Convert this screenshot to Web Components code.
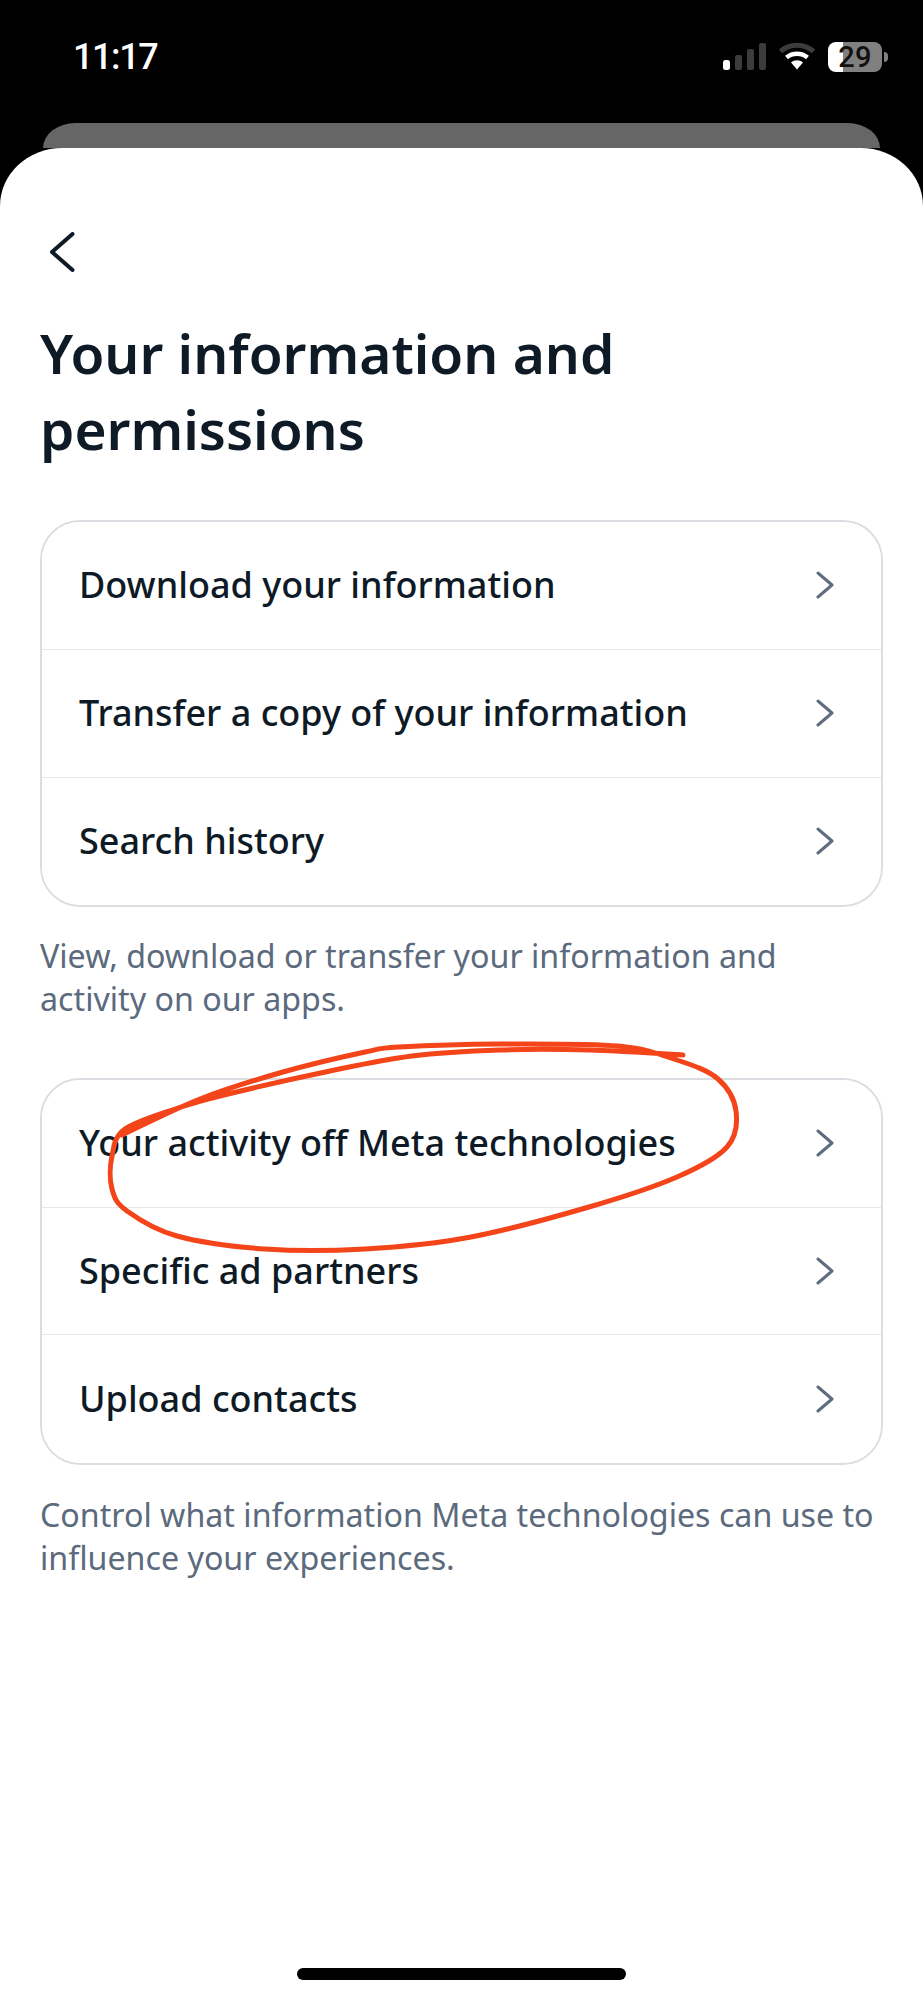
<!DOCTYPE html>
<html><head><meta charset="utf-8"><title>Your information and permissions</title>
<style>
html,body{margin:0;padding:0;background:#000;height:2000px;overflow:hidden}
body{font-family:"Noto Sans","Liberation Sans",sans-serif}
</style></head>
<body>
<phone-screen>
  <status-bar slot="status" time="11:17" battery="29"></status-bar>
  <back-icon-button></back-icon-button>
  <page-title>Your information and<br>permissions</page-title>
  <settings-group>
    <settings-row>Download your information</settings-row>
    <settings-row>Transfer a copy of your information</settings-row>
    <settings-row last>Search history</settings-row>
  </settings-group>
  <helper-text>View, download or transfer your information and<br>activity on our apps.</helper-text>
  <settings-group class="second" circled>
    <settings-row>Your activity off Meta technologies</settings-row>
    <settings-row>Specific ad partners</settings-row>
    <settings-row last>Upload contacts</settings-row>
  </settings-group>
  <helper-text class="last">Control what information Meta technologies can use to<br>influence your experiences.</helper-text>
</phone-screen>
<script>
function def(name, css, html, init){
  customElements.define(name, class extends HTMLElement{
    constructor(){super();const r=this.attachShadow({mode:'open'});r.innerHTML='<style>'+css+'</style>'+(typeof html==='function'?html(this):html);}
    connectedCallback(){ if(init) init(this); }
  });
}
def('phone-screen',`
  :host{display:flex;flex-direction:column;height:2000px;width:923px;background:#000;overflow:hidden}
  .peek{height:25px;margin:0 43px;background:#666;border-radius:52px 52px 0 0/40px 40px 0 0;flex:none}
  .sheet{flex:1;display:flex;flex-direction:column;background:#fff;border-radius:62px 62px 0 0/58px 58px 0 0;padding:84px 40px 0;min-height:0}
  .home{margin-top:auto;margin-bottom:20px;align-self:center;width:329px;height:12.500px;border-radius:6.500px;background:#000;flex:none}
`,`<slot name="status"></slot><div class="peek"></div><div class="sheet"><slot></slot><div class="home"></div></div>`);

def('status-bar',`
  :host{display:flex;align-items:flex-start;justify-content:space-between;height:123px;padding:0 35px 0 73px;box-sizing:border-box;color:#fff;flex:none}
  .time{font:500 36px/36px Roboto,"Liberation Sans",sans-serif;letter-spacing:-1.400px;margin-top:39px}
  .icons{display:flex;align-items:flex-start;margin-top:42px}
  svg{display:block}
  .wifi{margin-left:12px}
  .bat{margin-left:12px;display:flex;align-items:center}
  .cell{width:54px;height:30px;border-radius:8px;background:linear-gradient(90deg,#fff 0 15px,#808080 15px);color:#111;font:500 29px/31px Roboto,"Liberation Sans",sans-serif;text-align:center;letter-spacing:.3px}
  .nub{width:4px;height:10px;margin-left:2px;background:#808080;border-radius:0 4px 4px 0}
`,el=>`<div class="time">${el.getAttribute('time')}</div>
<div class="icons">
<svg width="43" height="28" viewBox="0 0 43 28"><rect x="0" y="18" width="7" height="10" rx="2.5" fill="#fff"/><rect x="12" y="13" width="7" height="15" rx="2" fill="#3c3c3c"/><rect x="24" y="7" width="7" height="21" rx="2" fill="#3c3c3c"/><rect x="36" y="1" width="7" height="27" rx="2" fill="#3c3c3c"/></svg>
<svg class="wifi" width="38" height="28" viewBox="0 0 38 28"><path d="M2.5 9.5C11.5 1.200 26.500 1.200 35.500 9.500" fill="none" stroke="#3c3c3c" stroke-width="5"/><path d="M8.500 15.500C14.500 10.500 23.500 10.500 29.500 15.500" fill="none" stroke="#fff" stroke-width="4.500"/><path d="M13 20.500C16.500 17.500 21.500 17.500 25 20.500L19 27.500Z" fill="#fff"/></svg>
<div class="bat"><div class="cell">${el.getAttribute('battery')}</div><div class="nub"></div></div>
</div>`);

def('back-icon-button',`:host{display:block;height:40px;flex:none}svg{display:block;margin-left:8px}`,
`<svg width="28" height="40" viewBox="0 0 28 40"><path d="M24.500 2L4 20L24.500 38" fill="none" stroke="#0e1a25" stroke-width="4" stroke-linecap="round" stroke-linejoin="round"/></svg>`);

def('page-title',`:host{display:block;font:600 55px/76px "Noto Sans","Liberation Sans",sans-serif;color:#0e1a25;margin-top:43px;flex:none}`,`<slot></slot>`);

def('settings-group',`
  :host{display:block;position:relative;flex:none;margin-top:53px}
  :host(.second){margin-top:57.500px}
  .box{border:2px solid #dadee3;border-radius:40px;overflow:hidden;background:#fff}
  svg{position:absolute;pointer-events:none;overflow:visible;left:0;top:0}
`,el=>`<div class="box"><slot></slot></div>`+(el.hasAttribute('circled')?`<svg width="1" height="1"><path fill="none" stroke="#f4441a" stroke-width="5" stroke-linecap="round" stroke-linejoin="round"/></svg>`:''),
el=>{
  const p=el.shadowRoot.querySelector('path'); if(!p) return;
  const ox=40, oy=1079;
  const pts=[[122,1136],[200,1100],[283,1073],[365,1053],[400,1048],[500,1045],[618,1047],[677,1061],[718,1080],[736,1112],[727,1148],[677,1178],[589,1208],[471,1238],[365,1250],[265,1250],[177,1237],[127,1212],[112,1190],[112,1157],[125,1130],[178,1109],[224,1096],[330,1072],[412,1057],[500,1051],[590,1051],[683,1056]].map(a=>[a[0]-ox,a[1]-oy]);
  let d='M'+pts[0].join(' ');
  for(let i=0;i<pts.length-1;i++){
    const a=pts[Math.max(i-1,0)],b=pts[i],c=pts[i+1],e=pts[Math.min(i+2,pts.length-1)];
    d+=` C${(b[0]+(c[0]-a[0])/6).toFixed(1)} ${(b[1]+(c[1]-a[1])/6).toFixed(1)} ${(c[0]-(e[0]-b[0])/6).toFixed(1)} ${(c[1]-(e[1]-b[1])/6).toFixed(1)} ${c[0]} ${c[1]}`;
  }
  p.setAttribute('d',d);
});

def('settings-row',`
  :host{display:flex;align-items:center;justify-content:space-between;box-sizing:border-box;height:127.800px;padding:0 47px 0 37px;border-bottom:1.500px solid #e3e6ea;font:500 36px/44px "Noto Sans","Liberation Sans",sans-serif;color:#0e1a25;background:#fff}
  :host([last]){border-bottom:0}
  svg{display:block;flex:none}
`,`<span><slot></slot></span><svg width="18" height="28" viewBox="0 0 18 28"><path d="M2 2L16 14L2 26" fill="none" stroke="#5f6d7e" stroke-width="3" stroke-linecap="round" stroke-linejoin="round"/></svg>`);

def('helper-text',`:host{display:block;font:400 32.200px/43px "Noto Sans","Liberation Sans",sans-serif;color:#5b6a7c;margin-top:27px;flex:none}:host(.last){margin-top:28px}`,`<slot></slot>`);
</script>
</body></html>
